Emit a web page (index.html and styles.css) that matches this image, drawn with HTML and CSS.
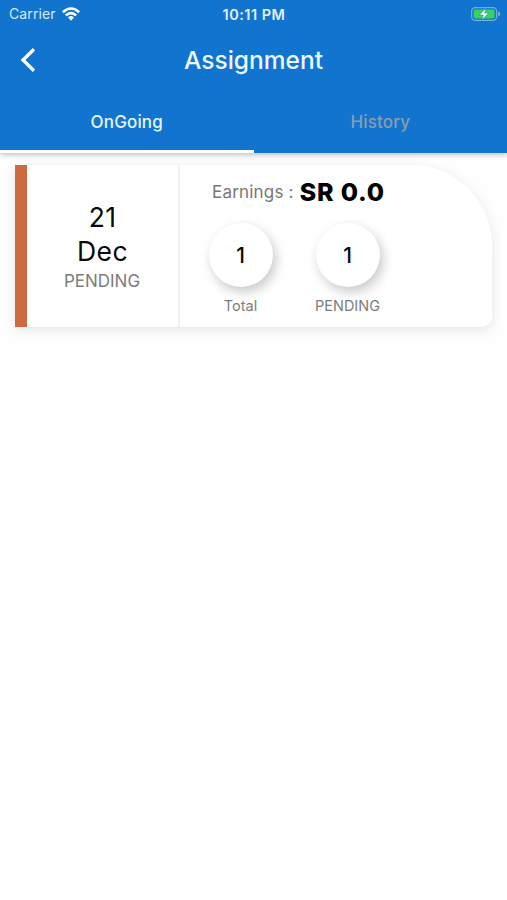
FILE: index.html
```html
<!DOCTYPE html>
<html lang="en">
<head>
<meta charset="utf-8">
<title>Assignment</title>
<link rel="stylesheet" href="styles.css">
</head>
<body>
<header class="header">
  <div class="status">
    <div class="carrier"><span class="carrier-name">Carrier</span>
      <svg class="wifi" viewBox="0 0 18 14" width="18" height="14"><g fill="none" stroke="#fff" stroke-width="2.6"><path d="M.9 5.2Q9-2.2 17.1 5.2"/><path d="M3.8 8.4Q9 3.7 14.2 8.4"/></g><path d="M6 10.5Q9 7.7 12 10.5L9 13.8Z" fill="#fff"/></svg>
    </div>
    <span class="clock">10:11 PM</span>
    <svg class="battery" viewBox="0 0 31 16" width="31" height="16"><rect x="1.6" y="1.6" width="25" height="12.8" rx="3.6" fill="none" stroke="#70aee5" stroke-width="1.2"/><rect x="3.6" y="3.6" width="21" height="8.8" rx="1.8" fill="#35d45b"/><path d="M28 5.6Q30.3 6.4 30.3 8T28 10.4Z" fill="#70aee5"/><path d="M15.8 2.2L9.4 9H13.2L11.8 14L18.6 7.1H14.8Z" fill="#fff" stroke="#1774d0" stroke-width=".5"/></svg>
  </div>
  <nav class="nav">
    <svg class="back" viewBox="0 0 16 26" width="16" height="26"><path d="M14 2.2L3 13L14 23.8" fill="none" stroke="#fff" stroke-width="3.3"/></svg>
    <h1 class="title">Assignment</h1>
  </nav>
  <div class="tabs">
    <div class="tab active"><span>OnGoing</span></div>
    <div class="tab"><span>History</span></div>
  </div>
</header>
<main class="content">
  <article class="card">
    <div class="date">
      <span class="day">21</span>
      <span class="month">Dec</span>
      <span class="state">PENDING</span>
    </div>
    <div class="details">
      <div class="earnings"><span class="label">Earnings :</span><span class="amount">SR 0.0</span></div>
      <div class="stats">
        <div class="stat"><div class="circle">1</div><span class="caption">Total</span></div>
        <div class="stat"><div class="circle">1</div><span class="caption">PENDING</span></div>
      </div>
    </div>
  </article>
</main>
</body>
</html>
```
FILE: styles.css
```css
* { box-sizing: border-box; }
body { margin: 0; min-height: 900px; background: #fefefe; font-family: Inter, sans-serif; color: #090909; }
svg { display: block; }
.header { position: relative; height: 152.5px; background: #1174cf; color: #fff; box-shadow: 0 2px 5px rgba(0,0,0,.24); }
.status { display: grid; grid-template-columns: 1fr auto 1fr; align-items: center; height: 28px; padding: 0 6px 0 7px; }
.carrier { display: flex; align-items: center; gap: 6px; padding-left: 2px; font-size: 14px; line-height: 28px; color: #d9eaf9; }
.carrier-name { letter-spacing: .1px; }
.wifi { margin-top: -1px; }
.clock { font-size: 14.5px; font-weight: 600; color: #e2f0fb; letter-spacing: .5px; }
.battery { justify-self: end; margin-top: -1px; }
.nav { display: grid; grid-template-columns: 1fr auto 1fr; align-items: center; height: 64px; padding: 0 20px; }
.title { margin: 0; font-size: 24.5px; line-height: 32px; font-weight: 500; letter-spacing: 0; color: #edf7ff; }
.tabs { display: flex; height: 60.5px; }
.tab { flex: 1; display: flex; justify-content: center; align-items: center; padding-top: 2px; font-size: 17px; font-weight: 500; letter-spacing: .15px; color: #8c9dac; border-bottom: 3px solid transparent; }
.tab.active { color: #e8f6ff; border-bottom-color: #fff; }
.content { padding: 12.5px 15px; }
.card { display: flex; height: 162px; background: #fff; border-left: 12px solid #cf6942; border-radius: 0 80px 10px 0; box-shadow: 0 3px 12px rgba(40,60,65,.13); }
.date { width: 153px; border-right: 2px solid #f0f1f1; display: flex; flex-direction: column; align-items: center; padding-top: 35px; }
.day, .month { font-size: 26.5px; line-height: 34px; letter-spacing: .4px; }
.state { font-size: 17px; line-height: 26px; color: #7d7d7d; margin-left: -1px; }
.details { flex: 1; padding: 10px 0 0 7px; }
.earnings { display: flex; align-items: center; height: 34px; padding-left: 25px; gap: 6px; }
.label { font-size: 17px; color: #777; letter-spacing: .2px; }
.amount { font-size: 25px; font-weight: 800; letter-spacing: .8px; color: #000; }
.stats { display: flex; }
.stat { width: 107px; display: flex; flex-direction: column; align-items: center; padding-top: 14px; }
.circle { width: 64px; height: 64px; border-radius: 50%; background: #fff; display: flex; align-items: center; justify-content: center; font-size: 21px; font-weight: 500; box-shadow: 3px 5px 12px rgba(0,0,0,.22); }
.caption { margin-top: 9px; font-size: 14.5px; line-height: 20px; color: #7d7d7d; }
```
